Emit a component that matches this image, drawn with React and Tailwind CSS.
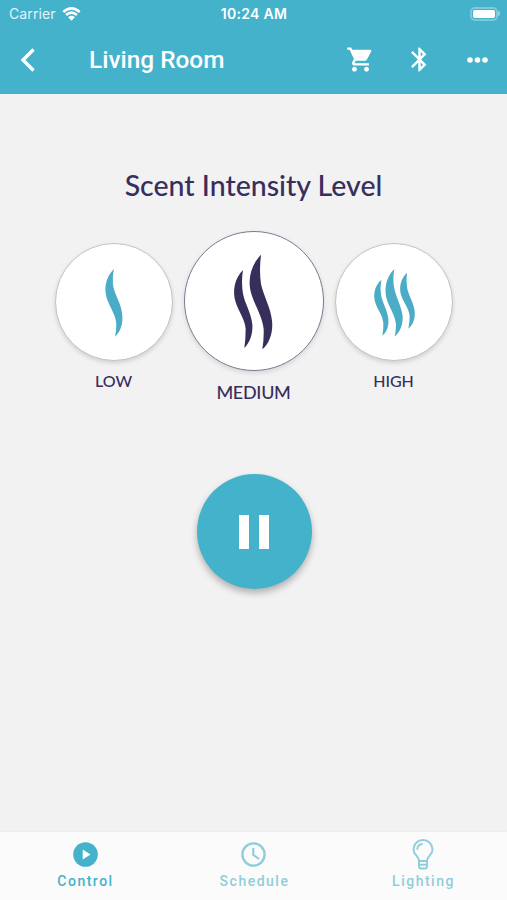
import { MdBluetooth, MdShoppingCart } from "react-icons/md";

// one wisp of steam per path
const LEVELS = [
  {
    id: "low",
    label: "LOW",
    viewBox: "33 58 348 348",
    paths: [
      "M207 133C179 160 174 200 191 235C202 260 213 276 214 300Q214 318 210 336C226 322 234 298 232 274C231 240 211 214 205 186Q201 162 207 133Z",
    ],
  },
  {
    id: "medium",
    label: "MEDIUM",
    viewBox: "16 19 414 414",
    paths: [
      "M190 133C165 158 157 195 168 230C176 256 196 281 198 310Q198 340 194 367C212 350 220 322 218 296C215 262 195 232 190 204Q184 170 190 133Z",
      "M244 87C212 120 202 165 216 208C227 242 249 275 252 310Q253 342 248 371C270 352 281 318 277 285C273 245 252 212 244 175Q238 134 244 87Z",
    ],
  },
  {
    id: "high",
    label: "HIGH",
    viewBox: "31 58 348 348",
    paths: [
      "M167 165C146 184 141 211 150 237C157 256 171 273 173 294Q174 314 170 333C185 320 190 301 188 282C185 255 170 234 166 210Q163 189 167 165Z",
      "M206 133C179 160 174 197 185 229C194 254 209 274 211 300Q211 318 207 336C225 321 232 298 231 275C228 244 210 217 205 186Q201 162 206 133Z",
      "M244 144C223 164 219 192 228 216C235 234 249 250 252 273Q252 293 248 312C263 300 269 281 267 260C264 233 248 212 244 188Q241 166 244 144Z",
    ],
  },
];

function StatusBar() {
  return (
    <div className="flex h-[27px] items-center justify-between px-[7px] text-[14px] text-white">
      <div className="flex w-[100px] items-center gap-[6px] pl-[2px]">
        <span className="tracking-[0.1px] opacity-85">Carrier</span>
        <svg className="h-[14px] w-[19px]" viewBox="0 0 18 14" fill="none">
          <path d="M0.8 5Q9-2.2 17.2 5M3.6 8Q9 3.2 14.4 8" stroke="white" strokeWidth="2.6" />
          <path d="M5.6 10.2Q9 7.3 12.4 10.2L9 13.7Z" fill="white" />
        </svg>
      </div>
      <span className="pl-px font-semibold tracking-[0.3px]">10:24 AM</span>
      <div className="flex w-[100px] items-center justify-end">
        <div className="h-[14px] w-[28px] rounded-[5px] border-2 border-white/30 p-px">
          <div className="h-full rounded-[2px] bg-white" />
        </div>
        <div className="h-[5px] w-[2px] rounded-r-full bg-white/40" />
      </div>
    </div>
  );
}

function Header() {
  return (
    <header className="h-[94px] bg-[#44b2cb] font-[Inter,sans-serif]">
      <StatusBar />
      <div className="flex h-[65px] items-center pl-[20px] pr-[19px] text-white">
        <svg className="h-[24px] w-[15px]" viewBox="0 0 15 24" fill="none">
          <path d="M13.5 1.5L3 12L13.5 22.5" stroke="white" strokeWidth="3.4" />
        </svg>
        <h1 className="ml-[54px] flex-1 pt-px font-[Roboto,sans-serif] text-[24.4px] leading-none font-medium">
          Living Room
        </h1>
        <MdShoppingCart className="size-[29px]" />
        <MdBluetooth className="ml-[30px] size-[29px]" />
        <svg className="ml-[33px] h-[6px] w-[21px]" viewBox="0 0 21 6" fill="white">
          <circle cx="3" cy="3" r="2.8" />
          <circle cx="10.5" cy="3" r="2.8" />
          <circle cx="18" cy="3" r="2.8" />
        </svg>
      </div>
    </header>
  );
}

function LevelButton({ level, active }) {
  return (
    <button className={active ? "flex flex-col items-center" : "mt-[12px] flex flex-col items-center"}>
      <span
        className={
          active
            ? "size-[140px] rounded-full border border-[#7d7993] bg-white shadow-[0_2px_5px_rgba(0,0,0,0.12)]"
            : "size-[118px] rounded-full border border-[#c4c4c6] bg-white shadow-[0_2px_4px_rgba(0,0,0,0.14)]"
        }
      >
        <svg viewBox={level.viewBox} className={active ? "size-full text-[#372e5c]" : "size-full text-[#4bacc7]"}>
          {level.paths.map((d) => (
            <path key={d} d={d} fill="currentColor" />
          ))}
        </svg>
      </span>
      <span
        className={
          active
            ? "mt-[11px] text-[18px] leading-[20px] font-medium tracking-[-0.3px]"
            : "mt-[10px] text-[16px] leading-[20px] font-medium"
        }
      >
        {level.label}
      </span>
    </button>
  );
}

function TabBar() {
  return (
    <nav className="grid h-[68px] grid-cols-3 bg-[#fbfbfb] font-[Roboto,sans-serif] text-[14px] leading-[16px] font-medium tracking-[1.5px] text-[#8fced9] shadow-[0_-1px_2px_rgba(0,0,0,0.03)]">
      <button className="flex flex-col items-center pt-[10px] text-[#44b2cb]">
        <svg className="ml-px size-[25px]" viewBox="0 0 25 25">
          <circle cx="12.5" cy="12.5" r="12.3" fill="currentColor" />
          <path d="M9.7 7.5L17.5 12.5L9.7 17.5Z" fill="white" />
        </svg>
        <span className="mt-[6px] pl-[2px]">Control</span>
      </button>
      <button className="flex flex-col items-center pt-[10px]">
        <svg className="size-[25px]" viewBox="0 0 25 25" fill="none" stroke="currentColor" strokeWidth="2.4">
          <circle cx="12.5" cy="12.5" r="11.1" />
          <path d="M12.3 6V13L18 16.8" strokeWidth="2.1" />
        </svg>
        <span className="mt-[6px] pl-[2px]">Schedule</span>
      </button>
      <button className="flex flex-col items-center pt-[7px]">
        <svg className="h-[31px] w-[22px]" viewBox="0 0 22 31" fill="none" stroke="currentColor" strokeWidth="1.9">
          <path d="M7 22C7 19 5.5 18 4 16.2C2.3 14.2 1.5 12.5 1.5 10.4A9.5 9.4 0 0 1 20.5 10.4C20.5 12.5 19.7 14.2 18 16.2C16.5 18 15 19 15 22ZM7 22V27Q7 29.5 9 29.5H13Q15 29.5 15 27V22M7 25.8H15" />
          <path d="M5.3 10Q5.8 5.7 10 5" strokeLinecap="round" />
        </svg>
        <span className="mt-[3px] pl-[2px]">Lighting</span>
      </button>
    </nav>
  );
}

export default function App() {
  return (
    <div className="flex h-screen w-full flex-col overflow-hidden bg-[#f2f2f2]">
      <Header />
      <main className="flex flex-1 flex-col items-center font-[Lato,sans-serif] text-[#372e5c]">
        <h2 className="mt-[73px] text-[28.5px] leading-[36px] font-medium whitespace-nowrap">
          Scent Intensity Level
        </h2>
        <div className="mt-[28px] flex items-start gap-[11px]">
          {LEVELS.map((level) => (
            <LevelButton key={level.id} level={level} active={level.id === "medium"} />
          ))}
        </div>
        <button className="mt-[72px] ml-px flex size-[115px] items-center justify-center gap-[10px] rounded-full bg-[#44b2cb] shadow-[0_4px_7px_rgba(0,0,0,0.28)]">
          <span className="h-[34px] w-[10px] bg-white" />
          <span className="h-[34px] w-[10px] bg-white" />
        </button>
      </main>
      <TabBar />
    </div>
  );
}
